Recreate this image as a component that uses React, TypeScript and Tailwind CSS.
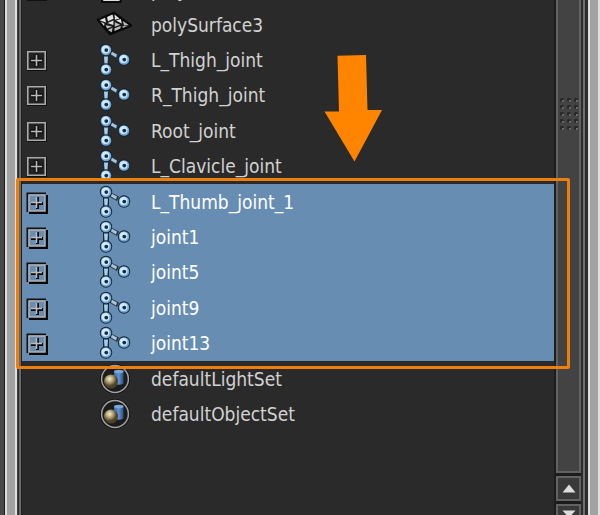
import { useState } from 'react';

type NodeKind = 'cube' | 'mesh' | 'joint' | 'set';

interface OutlinerNode {
  name: string;
  kind: NodeKind;
}

const topNodes: OutlinerNode[] = [
  { name: 'polySurface3', kind: 'mesh' },
  { name: 'L_Thigh_joint', kind: 'joint' },
  { name: 'R_Thigh_joint', kind: 'joint' },
  { name: 'Root_joint', kind: 'joint' },
  { name: 'L_Clavicle_joint', kind: 'joint' },
];

const selectedNodes: OutlinerNode[] = [
  { name: 'L_Thumb_joint_1', kind: 'joint' },
  { name: 'joint1', kind: 'joint' },
  { name: 'joint5', kind: 'joint' },
  { name: 'joint9', kind: 'joint' },
  { name: 'joint13', kind: 'joint' },
];

const setNodes: OutlinerNode[] = [
  { name: 'defaultLightSet', kind: 'set' },
  { name: 'defaultObjectSet', kind: 'set' },
];

function JointIcon() {
  const balls = [
    [10, 7],
    [10, 26.5],
    [28, 16.5],
  ];
  return (
    <svg width="36" height="34" viewBox="0 0 36 34" aria-hidden="true">
      <path d="M10 11v11" stroke="#1d2a35" strokeWidth="6" />
      <path d="M8 13.5h4l-.6 8H8.6z" fill="#a6cfec" />
      <path d="M14 7l9 4.5-2 4.5-7-4z" fill="#26333f" />
      <path d="M15.5 8.5l5.5 3-1 3-5-3z" fill="#a9c3d8" />
      {balls.map(([x, y]) => (
        <g key={`${x}-${y}`}>
          <circle cx={x} cy={y} r="6.2" fill="#15222e" />
          <circle cx={x} cy={y} r="5.3" fill="#6fa8d8" />
          <circle cx={x - 0.4} cy={y - 0.5} r="3.9" fill="#cfe9f9" />
          <circle cx={x + 0.3} cy={y + 0.1} r="1.9" fill="#152c42" />
        </g>
      ))}
    </svg>
  );
}

function MeshIcon() {
  return (
    <svg width="36" height="34" viewBox="0 0 36 34" aria-hidden="true">
      <path d="M2 12L18 5l17 12.5L14 26z" fill="#1a1a1a" stroke="#080808" strokeWidth="2.5" strokeLinejoin="round" />
      <path
        d="M3.5 12.2l5.5-2.4 1 4.8zM11 9l5.5-2.4 1 4.2-5.5 2.4zM4.5 13.5l4 2.2-.5 2.3zM18.5 6.6l5 4-4.5 1.2zM11.5 15l6-2.6-.2 4.6zM20 12.6l4.8-1.5 1 4.4z"
        fill="#e3e3e3"
      />
      <path
        d="M9.7 17.2l6.4 1.2-5 2.2zM18.8 14.2l5.3 2.5-5.3 2.1zM27 13l6 4.3-5 .3zM12 22l4.5-2.2-.8 4.4zM18.6 20.2l6-2.2-.2 2.6-5.9 2.4zM26.4 18.3l5-.3-4.6 1.9z"
        fill="#bdbdbd"
      />
    </svg>
  );
}

function CubeIcon() {
  return (
    <svg width="36" height="34" viewBox="0 0 36 34" aria-hidden="true">
      <path d="M9 6h17l-1.5 23H6z" fill="#dedede" stroke="#0a0a0a" strokeWidth="2" />
    </svg>
  );
}

function SetIcon() {
  return (
    <svg width="36" height="34" viewBox="0 0 36 34" aria-hidden="true">
      <defs>
        <radialGradient id="ball" cx="40%" cy="32%">
          <stop offset="0" stopColor="#f5efcd" />
          <stop offset="0.5" stopColor="#b0a273" />
          <stop offset="1" stopColor="#4d4228" />
        </radialGradient>
        <linearGradient id="cylinder">
          <stop offset="0" stopColor="#3a6aa5" />
          <stop offset="0.5" stopColor="#5f93cf" />
          <stop offset="1" stopColor="#2a4f7c" />
        </linearGradient>
      </defs>
      <circle cx="19" cy="17" r="15" fill="#0e0e0e" />
      <circle cx="19" cy="17" r="13.4" fill="#1c1c1c" stroke="#a3a3a3" strokeWidth="1.5" />
      <path d="M18 9.5v12q5 2.5 9.5 0v-12z" fill="url(#cylinder)" />
      <ellipse cx="22.8" cy="9.5" rx="4.8" ry="1.8" fill="#79a7dc" />
      <circle cx="15" cy="19.5" r="7" fill="url(#ball)" />
    </svg>
  );
}

function NodeIcon({ kind }: { kind: NodeKind }) {
  if (kind === 'cube') return <CubeIcon />;
  if (kind === 'mesh') return <MeshIcon />;
  if (kind === 'set') return <SetIcon />;
  return <JointIcon />;
}

function ExpandButton({ name, selected }: { name: string; selected?: boolean }) {
  const [open, setOpen] = useState(false);
  return (
    <button
      type="button"
      aria-label={`Expand ${name}`}
      aria-expanded={open}
      onClick={() => setOpen(!open)}
      className="block"
    >
      <svg width="22" height="24" viewBox="0 -2 22 24" aria-hidden="true">
        {selected ? (
          <>
            <path d="M1.5 20V1.5H20" stroke="#111" strokeWidth="2" fill="none" />
            <path d="M3 20.5h17.5V3" stroke="#080808" strokeWidth="3" fill="none" />
            <path d="M3 19V3h16v16z" stroke="#b2b2b2" strokeWidth="1.5" fill="none" />
            <path d="M11.5 5v12M5 11.5h12" stroke="#080808" strokeWidth="3" />
            <path d="M10.5 5v11M5 10.5h11" stroke="#bdbdbd" strokeWidth="1.5" />
          </>
        ) : (
          <>
            <path d="M1 1h20v20H1z" fill="#101010" />
            <path d="M1.8 1.8h17.4v17.4H1.8z" fill="#222" stroke="#aaa" strokeWidth="1.6" />
            <path d="M10.5 4.5v12M4.5 10.5h12" stroke="#0b0b0b" strokeWidth="4" />
            <path d="M10.5 5v11M5 10.5h11" stroke="#b8b8b8" strokeWidth="1.6" />
          </>
        )}
      </svg>
    </button>
  );
}

function NodeRow({ node, selected }: { node: OutlinerNode; selected?: boolean }) {
  const expandable = node.kind === 'joint' || node.kind === 'cube';
  return (
    <li className="flex min-h-0 items-center">
      <div className="ml-1 w-[70px] shrink-0">
        {expandable && <ExpandButton name={node.name} selected={selected} />}
      </div>
      <div className="w-[55px] shrink-0">
        <NodeIcon kind={node.kind} />
      </div>
      <span className={selected ? 'text-white' : 'text-[#d2d2d2]'}>{node.name}</span>
    </li>
  );
}

function LeftFrame() {
  return (
    <div className="flex w-[22px] shrink-0">
      <div className="w-1 bg-[#484848]" />
      <div className="w-px bg-[#1c1c1c]" />
      <div className="w-3 border-x-2 border-[#dedede] bg-[#a2a2a2]" />
      <div className="w-px bg-[#404040]" />
      <div className="w-px bg-[#292929]" />
      <div className="w-0.5 bg-[#696969]" />
      <div className="w-px bg-[#202020]" />
    </div>
  );
}

function ScrollBar() {
  return (
    <div className="flex w-[27px] shrink-0 flex-col border-l-2 border-[#1d1d1d] bg-[#1b1b1b]">
      <div className="flex flex-1 items-start justify-center border-x-2 border-b-2 border-[#626262] bg-[#434343]">
        <div className="mt-[98px] grid grid-cols-3 gap-[3px]">
          {Array.from({ length: 15 }, (_, i) => (
            <span key={i} className="size-1 rounded-full border-t-2 border-l-2 border-[#262626] bg-[#737373]" />
          ))}
        </div>
      </div>
      <button
        type="button"
        aria-label="Scroll up"
        className="mt-[3px] flex h-[25px] items-center justify-center border-2 border-[#626262] bg-[#393939]"
      >
        <svg width="14" height="9" viewBox="0 0 14 9" aria-hidden="true">
          <path d="M7 0.5L13.5 8.5H0.5z" fill="#dedede" />
        </svg>
      </button>
      <button
        type="button"
        aria-label="Scroll down"
        className="mt-[3px] flex h-[11px] items-end justify-center overflow-hidden border-2 border-b-0 border-[#626262] bg-[#393939]"
      >
        <svg width="14" height="5" viewBox="0 0 14 5" aria-hidden="true">
          <path d="M0.5 0.5h13L9.5 5h-5z" fill="#dedede" />
        </svg>
      </button>
    </div>
  );
}

function RightFrame() {
  return (
    <div className="flex w-[19px] shrink-0">
      <div className="w-0.5 bg-[#2c2c2c]" />
      <div className="w-0.5 bg-[#707070]" />
      <div className="w-[3px] bg-[#2b2b2b]" />
      <div className="flex-1 border-x-2 border-[#dedede] bg-[#a2a2a2]" />
    </div>
  );
}

export default function App() {
  return (
    <div className="flex h-screen overflow-hidden bg-[#2a2a2a] font-['DejaVu_Sans_Condensed','Noto_Sans',sans-serif] text-[19px] leading-6">
      <LeftFrame />
      <main className="min-w-0 flex-1">
        {/* row scrolled almost out of view */}
        <ul className="flex h-[7px] flex-col justify-end overflow-hidden [&>li]:h-[35px] [&>li]:shrink-0">
          <NodeRow node={{ name: 'polySurface2', kind: 'cube' }} />
        </ul>
        <ul className="grid h-[177px] grid-rows-5">
          {topNodes.map((node) => (
            <NodeRow key={node.name} node={node} />
          ))}
        </ul>
        <div className="relative h-[177px] bg-[#688db2]">
          <ul className="grid h-full grid-rows-5">
            {selectedNodes.map((node) => (
              <NodeRow key={node.name} node={node} selected />
            ))}
          </ul>
          {/* callout around the selected joints */}
          <div className="pointer-events-none absolute -top-1.5 -right-4 -bottom-2 -left-1.5 z-10 rounded-xs border-3 border-[#f07f0a]" />
          <svg
            className="pointer-events-none absolute -top-[130px] left-[302px] z-10"
            width="60"
            height="108"
            viewBox="0 0 60 108"
            aria-hidden="true"
          >
            <path d="M13.5 1.8L42 1l1.5 55H58L30.5 107.5 0.5 57.5H15z" fill="#ff8500" />
          </svg>
        </div>
        <ul className="grid h-[71px] grid-rows-2">
          {setNodes.map((node) => (
            <NodeRow key={node.name} node={node} />
          ))}
        </ul>
      </main>
      <ScrollBar />
      <RightFrame />
    </div>
  );
}
